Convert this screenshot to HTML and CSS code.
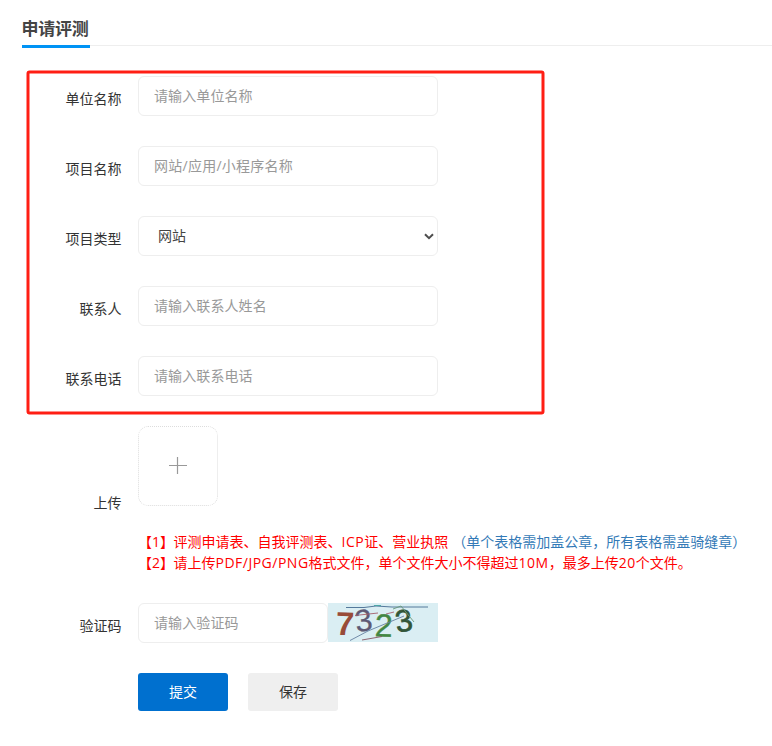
FILE: index.html
```html
<!DOCTYPE html>
<html lang="zh-CN">
<head>
<meta charset="utf-8">
<title>申请评测</title>
<link rel="stylesheet" href="styles.css">
</head>
<body>
<header class="head"><h1 class="title">申请评测</h1></header>
<form class="form">
  <div class="row"><label class="label">单位名称</label><input class="input" type="text" placeholder="请输入单位名称"></div>
  <div class="row"><label class="label">项目名称</label><input class="input project" type="text" placeholder="网站/应用/小程序名称"></div>
  <div class="row"><label class="label">项目类型</label>
    <div class="input select"><span>网站</span><svg class="chevron" width="10" height="7" viewBox="0 0 10 7"><path d="M1 1.2 5 5.2 9 1.2" fill="none" stroke="#4d4d4d" stroke-width="2"/></svg></div>
  </div>
  <div class="row"><label class="label">联系人</label><input class="input" type="text" placeholder="请输入联系人姓名"></div>
  <div class="row"><label class="label">联系电话</label><input class="input" type="text" placeholder="请输入联系电话"></div>
  <div class="row upload-row"><label class="label">上传</label>
    <div class="upload"><svg width="18" height="18" viewBox="0 0 18 18"><path d="M8.5 0v17M0 8.5h18" fill="none" stroke="#999" stroke-width="1.2"/></svg></div>
  </div>
  <div class="notes">
    <p><span class="tag">【1】</span>评测申请表、自我评测表、<span class="latin">ICP</span>证、营业执照<span class="hint">（单个表格需加盖公章，所有表格需盖骑缝章）</span></p>
    <p><span class="tag">【2】</span>请上传<span class="latin">PDF/JPG/PNG</span>格式文件，单个文件大小不得超过<span class="latin">10M</span>，最多上传<span class="latin">20</span>个文件。</p>
  </div>
  <div class="row code-row"><label class="label">验证码</label><input class="input code" type="text" placeholder="请输入验证码">
    <svg class="captcha" width="110" height="39" viewBox="0 0 110 39">
      <rect width="110" height="39" fill="#daeef3"/>
      <g class="digits">
        <text x="8" y="32" font-size="33" font-weight="700" fill="#984b38" transform="rotate(2 17 21)">7</text>
        <text x="27" y="28" font-size="31" fill="#5d5a75" stroke="#5d5a75" stroke-width=".3" transform="rotate(-8 36 18)">3</text>
        <text x="47" y="33.5" font-size="32" fill="#438743" stroke="#438743" stroke-width=".4" transform="rotate(2 56 22)">2</text>
        <text x="67" y="28.5" font-size="31" fill="#315538" stroke="#315538" stroke-width=".7" transform="rotate(-8 75 17)">3</text>
      </g>
      <g fill="none" stroke-width=".9">
        <path d="M18 4.5h18l12-1.5 16 1h36" stroke="#456b91"/>
        <path d="M46 2.5h7" stroke="#43a3a3"/>
        <path d="M22 37.5 40 28l36-15" stroke="#6580a0"/>
        <path d="M34 37 54 33.5" stroke="#865563"/>
        <path d="M27 12.5 50 10M58 11l8-2" stroke="#a55f6b"/>
        <path d="M65 6 73 3l13 16" stroke="#689779"/>
      </g>
    </svg>
  </div>
  <div class="actions"><button class="btn primary" type="button">提交</button><button class="btn" type="button">保存</button></div>
</form>
<svg class="marker" width="520" height="346" viewBox="0 0 520 346"><rect x="3" y="3" width="515" height="341" rx="1.5" fill="none" stroke="#ff1e14" stroke-width="3"/></svg>
</body>
</html>
```
FILE: styles.css
```css
* { box-sizing: border-box; }
body {
  margin: 0;
  height: 746px;
  overflow: hidden;
  background: #fff;
  color: #333;
  font: 14px/20px "Open Sans", "Noto Sans CJK SC", sans-serif;
}
.head {
  display: flex;
  height: 46px;
  margin-left: 22px;
  border-bottom: 1px solid #eee;
}
.title {
  width: 68px;
  height: 48px;
  margin: 0;
  padding-top: 16px;
  border-bottom: 3px solid #0093f5;
  color: #444;
  font: 700 17px/24px "Noto Sans CJK SC", sans-serif;
  letter-spacing: -0.2px;
  text-indent: -0.6px;
  white-space: nowrap;
}
.form { padding-top: 30px; }
.row { display: flex; height: 40px; margin-bottom: 30px; }
.label {
  width: 122px;
  margin-right: 16px;
  padding: 13px 0.5px 0 0;
  text-align: right;
}
.input {
  width: 300px;
  height: 40px;
  padding: 0 15px 2px;
  border: 1px solid #eee;
  border-radius: 6px;
  background: #fff;
  color: #444;
  font: inherit;
  letter-spacing: 0.1px;
}
.project { letter-spacing: 0.25px; }
.input::placeholder { color: #999; opacity: 1; }
.select {
  display: flex;
  align-items: center;
  justify-content: space-between;
  padding: 0 3px 0 19px;
}
.upload-row { height: 80px; margin-bottom: 25px; }
.upload-row .label { padding-top: 67px; }
.upload {
  display: flex;
  align-items: center;
  justify-content: center;
  width: 80px;
  height: 80px;
  border: 1px dotted #ddd;
  border-radius: 10px;
}
.notes {
  height: 42px;
  margin: 0 0 30px 138px;
  color: #f00;
  line-height: 21px;
  white-space: nowrap;
}
.notes p { margin: 0; }
.tag { display: inline-block; width: 35.5px; }
.latin { letter-spacing: 0.5px; }
.hint { margin-left: 4px; color: #337ab7; }
.code-row { margin-bottom: 30px; }
.code { width: 190px; }
.captcha { display: block; }
.digits { font-family: "Liberation Sans", sans-serif; }
.actions { display: flex; gap: 20px; margin-left: 138px; }
.btn {
  width: 90px;
  height: 38px;
  padding: 0;
  border: 0;
  border-radius: 3px;
  background: #efefef;
  color: #333;
  font: inherit;
}
.primary { background: #0070cf; color: #fff; }
.marker { position: absolute; left: 25px; top: 69px; pointer-events: none; }
```
